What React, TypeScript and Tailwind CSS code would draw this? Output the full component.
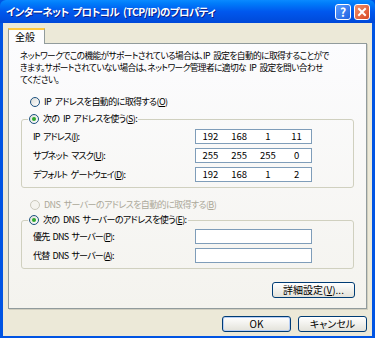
const jp = "font-['Noto_Sans_CJK_JP',sans-serif] [font-feature-settings:'palt']";

function Radio({ checked, disabled }: { checked?: boolean; disabled?: boolean }) {
  return (
    <span
      className={`inline-flex h-[10px] w-[10px] shrink-0 items-center justify-center rounded-full border ${
        disabled ? "border-[#CAC8BB] bg-[#F4F3EE]" : "border-[#1C5180] bg-gradient-to-br from-[#DCDCD7] to-white"
      }`}
    >
      {checked && <span className="h-[4px] w-[4px] rounded-full bg-[#2CA82C]" />}
    </span>
  );
}

function Field({ parts }: { parts?: string[] }) {
  return (
    <div className="grid h-[15px] w-[117px] grid-cols-4 border border-[#7F9DB9] bg-white text-[9.5px] leading-[13px] tracking-normal">
      {parts?.map((p, i) => (
        <span key={i} className="text-center">
          {p}
        </span>
      ))}
    </div>
  );
}

function Row({ label, parts }: { label: React.ReactNode; parts?: string[] }) {
  return (
    <div className="flex h-[15px] items-center pl-[11px]">
      <span className="w-[162px] tracking-[-0.8px]">{label}</span>
      <Field parts={parts} />
    </div>
  );
}

function Btn({ children, w, def }: { children: React.ReactNode; w: string; def?: boolean }) {
  return (
    <div
      className={`flex h-[16px] ${w} items-center justify-center rounded-[3px] border border-[#003C74] bg-gradient-to-b from-white to-[#E3E2DA] text-[10px] leading-none tracking-normal ${
        def ? "shadow-[inset_0_0_0_1px_#B8CFF5]" : ""
      }`}
    >
      {children}
    </div>
  );
}

const U = ({ c }: { c: string }) => <span className="underline">{c}</span>;

export default function App() {
  return (
    <div
      className={`flex h-[338px] w-[375px] flex-col bg-[#0054E3] px-[3px] pb-[3px] text-[9px] leading-[12px] tracking-[-0.6px] [word-spacing:2px] text-black ${jp}`}
    >
      {/* title bar */}
      <div className="-mx-[3px] flex h-[23px] shrink-0 items-center rounded-t-[6px] bg-gradient-to-b from-[#0A8AFF] via-[#0058EE] to-[#0048D8] pl-[6px] pr-[5px]">
        <span className="flex-1 text-[10.5px] font-bold text-white [text-shadow:1px_1px_0_#0A1E8A]">
          インターネット プロトコル (TCP/IP)のプロパティ
        </span>
        <div className="flex gap-[3px]">
          <div className="flex h-[16px] w-[16px] items-center justify-center rounded-[3px] border border-white bg-gradient-to-br from-[#5C9DFF] to-[#1E5FE0] text-[12px] font-bold tracking-normal text-white">
            ?
          </div>
          <div className="flex h-[16px] w-[16px] items-center justify-center rounded-[3px] border border-white bg-gradient-to-br from-[#F08F6A] to-[#D8451E]">
            <svg width="10" height="10" viewBox="0 0 10 10">
              <path d="M2 2 L8 8 M8 2 L2 8" stroke="white" strokeWidth="2" strokeLinecap="square" />
            </svg>
          </div>
        </div>
      </div>

      {/* body */}
      <div className="flex flex-1 flex-col bg-[#ECE9D8] px-[5px] pt-[5px] pb-[4px]">
        <div className="flex">
          <div className="relative z-10 -mb-px flex h-[16px] w-[37px] items-center border-x border-t-2 border-x-[#919B9C] border-t-[#FFC83C] bg-[#FCFCFE] pl-[6px] text-[10px] tracking-normal">
            全般
          </div>
        </div>
        <div className="flex flex-col border border-[#919B9C] bg-gradient-to-b from-[#FCFCFE] to-[#F4F3EE] pt-[6px] pb-[10px] shadow-[1px_1px_0_#D0CEBF]">
          <div className="pl-[11px] text-[8.7px] whitespace-nowrap">
            <div>ネットワークでこの機能がサポートされている場合は、IP 設定を自動的に取得することがで</div>
            <div>きます。サポートされていない場合は、ネットワーク管理者に適切な IP 設定を問い合わせ</div>
            <div>てください。</div>
          </div>

          <div className="mt-[10px] flex h-[12px] items-center gap-[4px] pl-[21px]">
            <Radio />
            <span>
              IP アドレスを自動的に取得する(<U c="O" />)
            </span>
          </div>

          <fieldset className="mx-[12px] mt-[5px] rounded-[3px] border border-[#D0D0BF] pb-[5px]">
            <legend className="ml-[6px] flex h-[12px] items-center gap-[4px] px-[1px]">
              <Radio checked />
              <span>
                次の IP アドレスを使う(<U c="S" />):
              </span>
            </legend>
            <div className="mt-[4px] flex flex-col gap-[4px]">
              <Row label={<>IP アドレス(<U c="I" />):</>} parts={["192", "168", "1", "11"]} />
              <Row label={<>サブネット マスク(<U c="U" />):</>} parts={["255", "255", "255", "0"]} />
              <Row label={<>デフォルト ゲートウェイ(<U c="D" />):</>} parts={["192", "168", "1", "2"]} />
            </div>
          </fieldset>

          <div className="mt-[11px] flex h-[12px] items-center gap-[4px] pl-[21px] text-[#ACA899]">
            <Radio disabled />
            <span>
              DNS サーバーのアドレスを自動的に取得する(<U c="B" />)
            </span>
          </div>

          <fieldset className="mx-[12px] mt-[3px] rounded-[3px] border border-[#D0D0BF] pb-[5px]">
            <legend className="ml-[6px] flex h-[12px] items-center gap-[4px] px-[1px]">
              <Radio checked />
              <span>
                次の DNS サーバーのアドレスを使う(<U c="E" />):
              </span>
            </legend>
            <div className="mt-[3px] flex flex-col gap-[4px]">
              <Row label={<>優先 DNS サーバー(<U c="P" />):</>} />
              <Row label={<>代替 DNS サーバー(<U c="A" />):</>} />
            </div>
          </fieldset>

          <div className="mt-[13px] flex justify-end pr-[11px]">
            <Btn w="w-[83px]">
              詳細設定(<U c="V" />)...
            </Btn>
          </div>
        </div>

        <div className="mt-[7px] flex justify-end gap-[7px]">
          <Btn w="w-[69px]" def>
            OK
          </Btn>
          <Btn w="w-[69px]">キャンセル</Btn>
        </div>
      </div>
    </div>
  );
}
